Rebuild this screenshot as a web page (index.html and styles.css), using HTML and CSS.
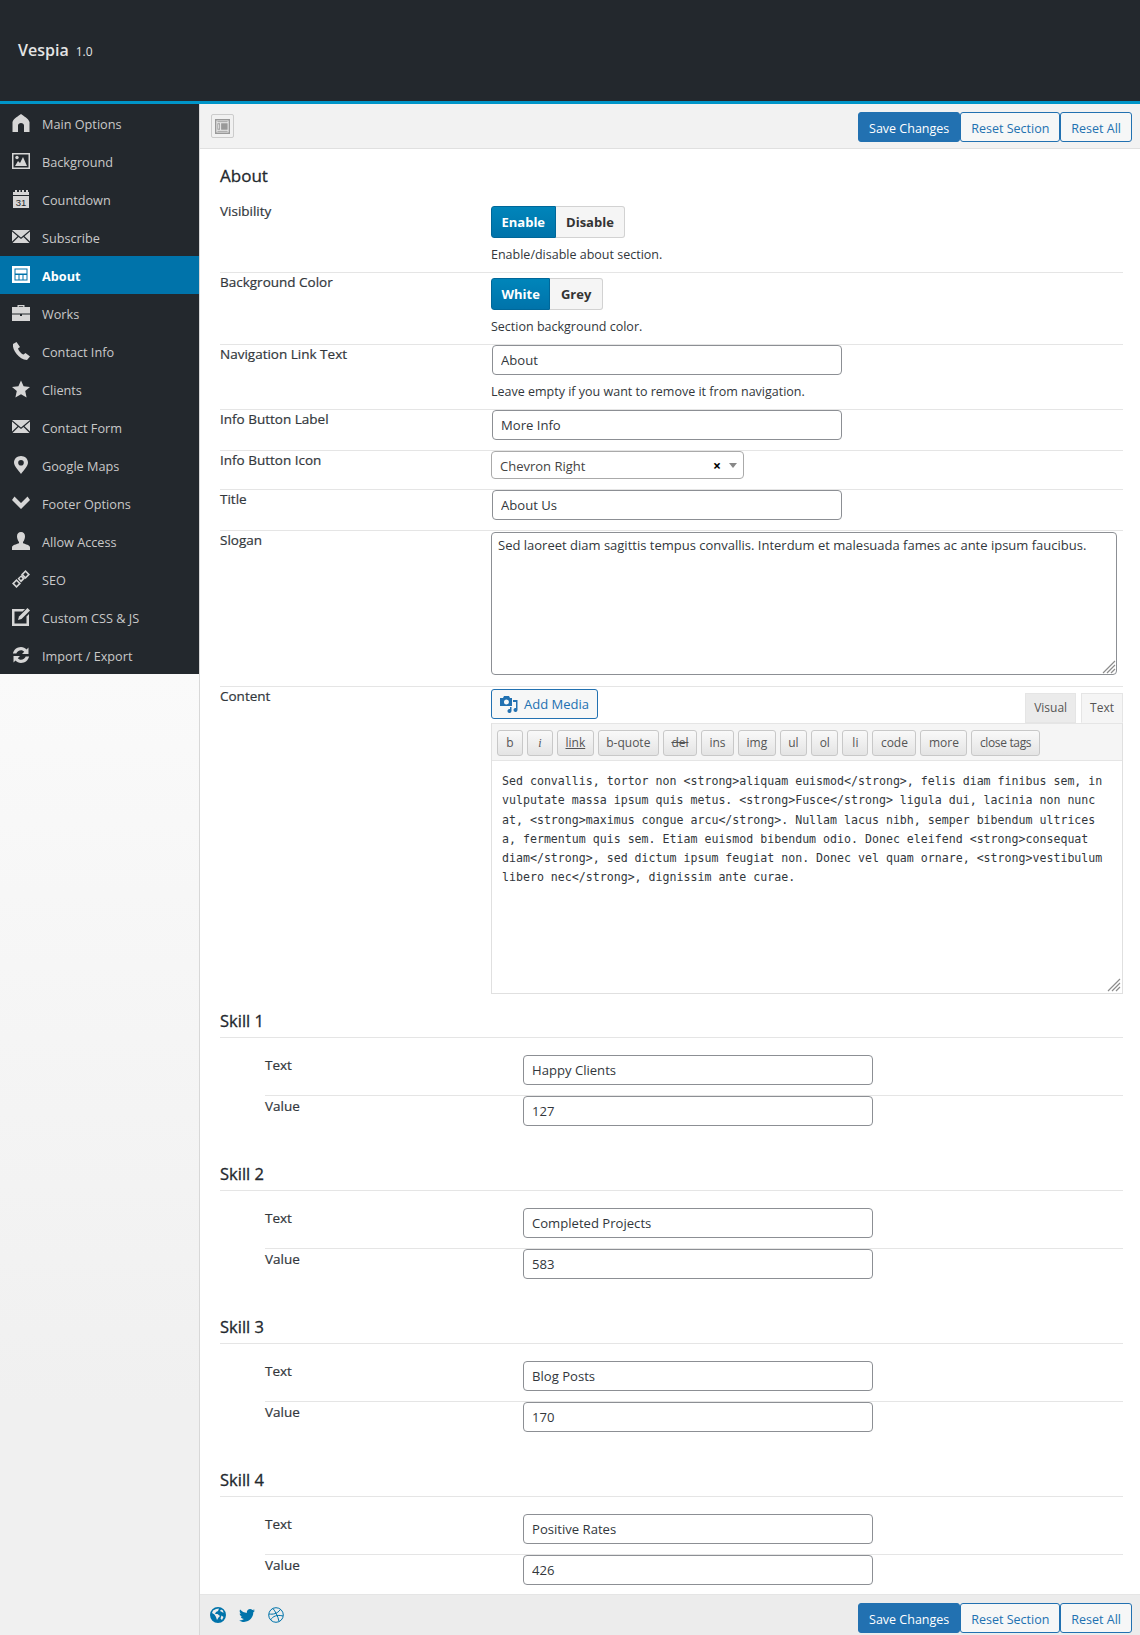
FILE: index.html
```html
<!DOCTYPE html>
<html lang="en">
<head>
<meta charset="utf-8">
<title>Vespia Options</title>
<link rel="stylesheet" href="styles.css">
</head>
<body>
<header class="topbar"><span class="brand">Vespia</span><span class="version">1.0</span></header>
<div class="layout">
  <nav class="sidebar">
    <ul class="menu">
      <li class="menu-item"><svg class="menu-icon" viewBox="0 0 18 18"><path d="M9 0C6.500 2.300 2 3.600.5 8v10H6v-6.500C6 10 7.400 9 9 9s3 1 3 2.500V18h5.500V8C16 3.600 11.500 2.300 9 0z"/></svg>Main Options</li>
      <li class="menu-item"><svg class="menu-icon" viewBox="0 0 18 18"><path fill-rule="evenodd" d="M0 1h18v16H0zM1.500 2.500v13h15v-13z"/><path d="M3 14l3-5 2 2 3-6 4 9z"/><circle cx="5" cy="5.500" r="1.700"/></svg>Background</li>
      <li class="menu-item"><svg class="menu-icon" viewBox="0 0 18 18"><path d="M1 2h2V0h2v2h2V0h1.500v2H10V0h2v2h2V0h2v2h1v3H1z"/><path d="M1 6h16v12H1z"/><text class="cal-num" x="9" y="16" text-anchor="middle">31</text></svg>Countdown</li>
      <li class="menu-item"><svg class="menu-icon" viewBox="0 0 18 18"><path d="M0 2h18L9 9.500zM0 3.500l5.500 4.700L0 13.500zM18 3.500l-5.500 4.700 5.500 5.300zM6.500 9L9 11l2.500-2 6 6H.5z"/></svg>Subscribe</li>
      <li class="menu-item is-active"><svg class="menu-icon" viewBox="0 0 18 18"><path fill-rule="evenodd" d="M0 0h18v17H0zM2.500 2.500v12h13v-12z"/><path d="M3.500 3.500h11v4h-11zM3.500 9h3v4.500h-3zM7.500 9h3v4.500h-3zM11.500 9h3v4.500h-3z"/></svg>About</li>
      <li class="menu-item"><svg class="menu-icon" viewBox="0 0 18 18"><path fill-rule="evenodd" d="M5.500 3V1h7v2H18v6.500H0V3zM6.800 2.200V3h4.400v-.8z"/><path d="M0 10.500h8V12h2v-1.500h8V17H0z"/></svg>Works</li>
      <li class="menu-item"><svg class="menu-icon" viewBox="0 0 18 18"><path d="M4.500 0L1 2C0 8 7 17.500 15 18l3-3.500-4.500-3.500-2 1.500C9.500 12 6.500 8.500 6 6.500L8 5z"/></svg>Contact Info</li>
      <li class="menu-item"><svg class="menu-icon" viewBox="0 0 18 18"><path d="M9 .5l2.600 5.800 6.400.6-4.800 4.200 1.400 6.400L9 14.200l-5.600 3.300 1.400-6.400L0 6.900l6.400-.6z"/></svg>Clients</li>
      <li class="menu-item"><svg class="menu-icon" viewBox="0 0 18 18"><path d="M0 2h18L9 9.500zM0 3.500l5.500 4.700L0 13.500zM18 3.500l-5.500 4.700 5.500 5.300zM6.500 9L9 11l2.500-2 6 6H.5z"/></svg>Contact Form</li>
      <li class="menu-item"><svg class="menu-icon" viewBox="0 0 18 18"><path fill-rule="evenodd" d="M9 0c3.800 0 7 2.800 7 6.600C16 10.500 11 15 9 18 7 15 2 10.500 2 6.600 2 2.800 5.200 0 9 0zm0 4a2.800 2.800 0 100 5.600A2.800 2.800 0 009 4z"/></svg>Google Maps</li>
      <li class="menu-item"><svg class="menu-icon" viewBox="0 0 18 18"><path d="M2.500 2.500L9 9l6.500-6.500L18 6l-9 9-9-9z"/></svg>Footer Options</li>
      <li class="menu-item"><svg class="menu-icon" viewBox="0 0 18 18"><path d="M9 0c2.500 0 4 1.800 4 4.300 0 2.400-1 4.700-2 5.600v1.400c2.500 1 7 1.800 7 4.200V18H0v-2.500c0-2.400 4.500-3.200 7-4.200V9.900c-1-.9-2-3.200-2-5.600C5 1.800 6.500 0 9 0z"/></svg>Allow Access</li>
      <li class="menu-item"><svg class="menu-icon" viewBox="0 0 18 18"><path fill-rule="evenodd" d="M0 13.500L4.500 9 9 13.500 4.500 18zM2.300 13.500L4.500 15.700 6.700 13.500 4.500 11.300z"/><path fill-rule="evenodd" d="M9 4.500L13.500 0 18 4.500 13.500 9zM11.300 4.500L13.500 6.700 15.700 4.500 13.500 2.300z"/><path fill-rule="evenodd" d="M5.500 8.500L9.500 5l3.500 3.500-4 4zM7.500 8.500L9 10l1.500-1.500L9 7z"/></svg>SEO</li>
      <li class="menu-item"><svg class="menu-icon" viewBox="0 0 18 18"><path d="M0 1h13l-2.500 2.500h-8v12h12v-7L17 6v12H0z"/><path d="M15.500 0L18 2.500 9.500 11 6 12l1-3.500z"/></svg>Custom CSS &amp; JS</li>
      <li class="menu-item"><svg class="menu-icon" viewBox="0 0 18 18"><path d="M9 1c2.200 0 4.200 1 5.500 2.500L16.500 1.500V8H10l2.200-2.200C11.500 5 10.300 4.300 9 4.300 6.900 4.300 5 5.600 4.300 7.500H.9C1.700 3.800 5 1 9 1zM1.500 10H8l-2.200 2.200c.7.800 1.900 1.500 3.200 1.500 2.100 0 4-1.300 4.700-3.200h3.400C16.300 14.200 13 17 9 17c-2.200 0-4.200-1-5.500-2.500l-2 2z"/></svg>Import / Export</li>
    </ul>
  </nav>
  <main class="main">
    <div class="actionbar">
      <span class="expand"><svg class="expand-icon" viewBox="0 0 16 16"><path fill-rule="evenodd" d="M0 0h16v16H0zM1.500 1.500v13h13v-13z"/><path d="M2.500 2.500h11v1h-11zM2.500 12.500h11v1h-11z"/><path fill-rule="evenodd" d="M2.500 4.500h3v7h-3zM3.500 5.500v5h1v-5z"/><path d="M6.500 4.500h7v7h-7z"/></svg></span>
      <div class="actions"><a class="btn btn-primary">Save Changes</a><a class="btn">Reset Section</a><a class="btn">Reset All</a></div>
    </div>
    <div class="content">
      <h2 class="section-title">About</h2>
      <div class="row row-tall row-first">
        <div class="label">Visibility</div>
        <div class="field"><div class="toggle"><span class="toggle-on">Enable</span><span class="toggle-off">Disable</span></div><p class="desc">Enable/disable about section.</p></div>
      </div>
      <div class="row row-tall">
        <div class="label">Background Color</div>
        <div class="field"><div class="toggle"><span class="toggle-on">White</span><span class="toggle-off">Grey</span></div><p class="desc">Section background color.</p></div>
      </div>
      <div class="row">
        <div class="label">Navigation Link Text</div>
        <div class="field"><input class="input" type="text" value="About"><p class="desc">Leave empty if you want to remove it from navigation.</p></div>
      </div>
      <div class="row row-pad">
        <div class="label">Info Button Label</div>
        <div class="field"><input class="input" type="text" value="More Info"></div>
      </div>
      <div class="row row-pad">
        <div class="label">Info Button Icon</div>
        <div class="field"><div class="select"><span class="select-value">Chevron Right</span><span class="select-clear">×</span><span class="select-arrow"></span></div></div>
      </div>
      <div class="row row-pad">
        <div class="label">Title</div>
        <div class="field"><input class="input" type="text" value="About Us"></div>
      </div>
      <div class="row row-slogan">
        <div class="label">Slogan</div>
        <div class="field"><div class="slogan-wrap"><textarea class="slogan" rows="5">Sed laoreet diam sagittis tempus convallis. Interdum et malesuada fames ac ante ipsum faucibus.</textarea><svg class="grip" viewBox="0 0 16 16"><path d="M15 3L3 15M15 7l-8 8M15 11l-4 4"/></svg></div></div>
      </div>
      <div class="row row-editor">
        <div class="label">Content</div>
        <div class="field">
          <div class="editor-head">
            <a class="media-btn"><svg class="media-icon" viewBox="0 0 18 18"><path fill-rule="evenodd" d="M0 3h3l1-2h5l1 2h2v8H0zM6.500 4.500a2.500 2.500 0 100 5 2.500 2.500 0 000-5z"/><path d="M13 5h4.500v10a2 2 0 11-1.500-2V7h-3z"/><path d="M11.500 12v4a2 2 0 11-1.500-2v-2z"/></svg>Add Media</a>
            <div class="tabs"><span class="tab">Visual</span><span class="tab tab-active">Text</span></div>
          </div>
          <div class="editor">
            <div class="quicktags"><span class="qt qt-b">b</span><span class="qt qt-i">i</span><span class="qt qt-link">link</span><span class="qt">b-quote</span><span class="qt qt-del">del</span><span class="qt">ins</span><span class="qt">img</span><span class="qt">ul</span><span class="qt">ol</span><span class="qt qt-li">li</span><span class="qt">code</span><span class="qt">more</span><span class="qt qt-close">close tags</span></div>
            <div class="code-wrap"><textarea class="code">Sed convallis, tortor non &lt;strong&gt;aliquam euismod&lt;/strong&gt;, felis diam finibus sem, in vulputate massa ipsum quis metus. &lt;strong&gt;Fusce&lt;/strong&gt; ligula dui, lacinia non nunc at, &lt;strong&gt;maximus congue arcu&lt;/strong&gt;. Nullam lacus nibh, semper bibendum ultrices a, fermentum quis sem. Etiam euismod bibendum odio. Donec eleifend &lt;strong&gt;consequat diam&lt;/strong&gt;, sed dictum ipsum feugiat non. Donec vel quam ornare, &lt;strong&gt;vestibulum libero nec&lt;/strong&gt;, dignissim ante curae.</textarea><svg class="grip" viewBox="0 0 16 16"><path d="M15 3L3 15M15 7l-8 8M15 11l-4 4"/></svg></div>
          </div>
        </div>
      </div>
      <section class="skill">
        <h3 class="skill-title">Skill 1</h3>
        <div class="subrow"><div class="sublabel">Text</div><input class="input" type="text" value="Happy Clients"></div>
        <div class="subrow"><div class="sublabel">Value</div><input class="input" type="text" value="127"></div>
      </section>
      <section class="skill">
        <h3 class="skill-title">Skill 2</h3>
        <div class="subrow"><div class="sublabel">Text</div><input class="input" type="text" value="Completed Projects"></div>
        <div class="subrow"><div class="sublabel">Value</div><input class="input" type="text" value="583"></div>
      </section>
      <section class="skill">
        <h3 class="skill-title">Skill 3</h3>
        <div class="subrow"><div class="sublabel">Text</div><input class="input" type="text" value="Blog Posts"></div>
        <div class="subrow"><div class="sublabel">Value</div><input class="input" type="text" value="170"></div>
      </section>
      <section class="skill">
        <h3 class="skill-title">Skill 4</h3>
        <div class="subrow"><div class="sublabel">Text</div><input class="input" type="text" value="Positive Rates"></div>
        <div class="subrow"><div class="sublabel">Value</div><input class="input" type="text" value="426"></div>
      </section>
    </div>
    <div class="footerbar">
      <div class="social">
        <svg class="social-icon" viewBox="0 0 16 16"><path fill-rule="evenodd" d="M8 0a8 8 0 110 16A8 8 0 018 0zM3 3.500L2 6l2.500 1.500L6 10l1 3 1.500-2.500L10 9 7.500 7 5 7l1-2 2-1 1-2.500L6 2zM11 2.500L10 4l2 1 1.500 1-.5-2.500zM11.500 8.500l-1 3L12 13l1.500-3z"/></svg>
        <svg class="social-icon" viewBox="0 0 16 16"><path d="M16 3.500c-.6.3-1.200.4-1.900.5.7-.4 1.200-1 1.400-1.800-.6.4-1.300.6-2.100.8C12.800 2.400 12 2 11.100 2 9.300 2 7.800 3.500 7.800 5.300c0 .3 0 .5.1.7C5.200 5.900 2.800 4.600 1.100 2.600c-.3.500-.4 1-.4 1.600 0 1.100.6 2.100 1.500 2.700-.5 0-1-.2-1.500-.4 0 1.600 1.100 2.900 2.600 3.200-.3.100-.6.100-.9.100-.2 0-.4 0-.6-.1.4 1.300 1.600 2.200 3.100 2.300-1.100.9-2.500 1.400-4.100 1.400H0c1.500.9 3.200 1.500 5 1.500 6 0 9.300-5 9.300-9.300v-.4c.7-.5 1.200-1.100 1.700-1.700z"/></svg>
        <svg class="social-icon social-line" viewBox="0 0 16 16"><circle cx="8" cy="8" r="7.300"/><path d="M5 1.500c2 2.500 5 7.500 6 13M1 7c4 .5 8 0 11.500-4.500M2.500 13C5 9 9 7.500 15 9"/></svg>
      </div>
      <div class="actions"><a class="btn btn-primary">Save Changes</a><a class="btn">Reset Section</a><a class="btn">Reset All</a></div>
    </div>
  </main>
</div>
</body>
</html>
```

FILE: styles.css
```css
* { box-sizing: border-box; }
html, body { margin: 0; padding: 0; }
body {
  font-family: "Open Sans", "Noto Sans", sans-serif;
  font-size: 13px;
  color: #32373c;
  background: #f1f1f1;
  width: 1140px;
  height: 1635px;
  overflow: hidden;
}
.topbar {
  height: 104px;
  background: #23282d;
  border-bottom: 3px solid #0095c8;
  padding: 40px 0 0 18px;
  color: #e4e4e4;
  display: flex;
  align-items: baseline;
}
.brand { font-size: 16px; font-weight: 600; line-height: 20px; }
.version { font-size: 12px; margin-left: 7px; }
.layout { display: grid; grid-template-columns: 200px 940px; height: 1531px; }
.sidebar {
  border-right: 1px solid #d8d8d8;
  background: linear-gradient(#fafafa 570px, #f0f0f0 1300px);
}
.menu { list-style: none; margin: 0; padding: 0; background: #23282d; }
.menu-item {
  height: 38px;
  display: flex;
  align-items: center;
  padding: 2px 0 0 12px;
  color: #c9c9c9;
  font-size: 12.700px;
  gap: 12px;
}
.menu-item.is-active { background: #0073aa; color: #fff; font-weight: 700; }
.menu-icon { width: 18px; height: 18px; fill: #d6d6d6; flex: none; margin-top: -2px; }
.is-active .menu-icon { fill: #fff; }
.cal-num { font-size: 9.500px; fill: #23282d; font-family: "Liberation Sans", sans-serif; }
.main { background: #fff; display: flex; flex-direction: column; height: 1531px; overflow: hidden; }
.actionbar {
  height: 45px;
  flex: none;
  background: #f2f2f2;
  border-bottom: 1px solid #e0e0e0;
  display: flex;
  justify-content: space-between;
  padding: 8px 8px 0 11px;
}
.expand {
  width: 23px;
  height: 24px;
  margin-top: 2px;
  background: #f1f1f1;
  border: 1px solid #ccc;
  border-radius: 2px;
  display: flex;
  align-items: center;
  justify-content: center;
}
.expand-icon { width: 15px; height: 15px; fill: #999; }
.actions { display: flex; }
.btn {
  height: 30px;
  line-height: 28px;
  padding: 2px 10px 0;
  border: 1px solid #2271b1;
  border-radius: 3px;
  background: #f6f7f7;
  color: #2271b1;
  font-size: 12.500px;
}
.btn-primary { background: #2271b1; color: #fff; }
.content { flex: 1; padding: 0 17px 0 20px; overflow: hidden; }
.section-title {
  margin: 0;
  height: 52px;
  padding-top: 15px;
  font-size: 17px;
  line-height: 24px;
  font-weight: 400;
  -webkit-text-stroke: .3px #23282d;
  color: #23282d;
}
.row { display: flex; border-bottom: 1px solid #e5e5e5; padding-bottom: 7px; }
.row-tall .field { padding-top: 5px; }
.row-pad { padding-bottom: 10px; }
.row-slogan { padding-bottom: 11px; }
.row-editor { border-bottom: 0; padding-bottom: 0; }
.label {
  width: 271px;
  flex: none;
  margin-top: -1px;
  line-height: 20px;
  font-size: 13.500px;
  -webkit-text-stroke: .2px #32373c;
  color: #32373c;
}
.row-first .label { margin-top: 0; }
.field { flex: 1; min-width: 0; }
.toggle { display: inline-flex; height: 32px; vertical-align: top; font-weight: 700; font-size: 13px; }
.toggle-on {
  background: linear-gradient(#0085ba, #0073aa);
  border: 1px solid #006799;
  border-radius: 3px 0 0 3px;
  color: #fff;
  padding: 0 9.500px;
  line-height: 30px;
}
.toggle-off {
  background: #f5f5f5;
  border: 1px solid #d2d2d2;
  border-left: 0;
  border-radius: 0 3px 3px 0;
  color: #333;
  padding: 0 10.500px 0 10.500px;
  line-height: 30px;
}
.desc { margin: 7px 0 0; line-height: 20px; font-size: 12.500px; color: #32373c; }
.input {
  display: block;
  width: 350px;
  height: 30px;
  margin-left: 1px;
  padding: 0 8px;
  border: 1px solid #8c8f94;
  border-radius: 4px;
  background: #fff;
  font: 13.100px "Open Sans", sans-serif;
  color: #32373c;
}
.select {
  width: 253px;
  height: 28px;
  border: 1px solid #aaa;
  border-radius: 4px;
  display: flex;
  align-items: center;
  padding: 1px 0 0 8px;
  color: #444;
  position: relative;
}
.select-value { flex: 1; }
.select-clear { color: #000; font-weight: 700; font-size: 14px; margin-right: 8px; }
.select-arrow {
  width: 0;
  height: 0;
  border-style: solid;
  border-width: 5px 4px 0;
  border-color: #888 transparent transparent;
  margin-right: 6px;
}
.slogan-wrap { position: relative; width: 626px; height: 143px; margin-top: 1px; }
.slogan {
  display: block;
  width: 100%;
  height: 100%;
  resize: none;
  border: 1px solid #8c8f94;
  border-radius: 4px;
  padding: 2px 6px;
  font: 13px/20px "Open Sans", sans-serif;
  color: #32373c;
}
.grip { position: absolute; right: 1px; bottom: 1px; width: 16px; height: 16px; stroke: #8c8c8c; stroke-width: 1.200; fill: none; }
.editor-head { display: flex; justify-content: space-between; align-items: flex-start; height: 36px; padding-top: 2px; }
.media-btn {
  display: flex;
  align-items: center;
  gap: 6px;
  width: 107px;
  height: 30px;
  padding-left: 8px;
  border: 1px solid #2271b1;
  border-radius: 3px;
  background: #f6f7f7;
  color: #2271b1;
}
.media-icon { width: 18px; height: 18px; fill: #2271b1; }
.tabs { display: flex; gap: 5px; padding-top: 4px; }
.tab {
  height: 30px;
  line-height: 28px;
  padding: 0 8px;
  border: 1px solid #e5e5e5;
  background: #ebebeb;
  color: #555;
  font-size: 12px;
}
.tab-active { background: #f5f5f5; border-bottom-color: #f5f5f5; }
.editor { border: 1px solid #e0e0e0; border-top-color: #e5e5e5; }
.quicktags {
  height: 37px;
  background: #f5f5f5;
  border-bottom: 1px solid #e5e5e5;
  display: flex;
  gap: 4px;
  padding: 6px 0 0 5px;
}
.qt {
  height: 26px;
  line-height: 24px;
  padding: 0 7.500px;
  border: 1px solid #c8c8c8;
  border-radius: 3px;
  background: linear-gradient(#f9f9f9, #e4e4e4);
  color: #555;
  font-size: 12px;
  text-align: center;
}
.qt-b { min-width: 26px; }
.qt-i { font-style: italic; font-family: "Liberation Serif", serif; min-width: 26px; }
.qt-li { min-width: 26px; }
.qt-link { text-decoration: underline; }
.qt-del { text-decoration: line-through; }
.qt-close { letter-spacing: -.35px; }
.code-wrap { position: relative; height: 232px; background: #fff; }
.code {
  display: block;
  width: 100%;
  height: 100%;
  border: 0;
  resize: none;
  outline: 0;
  padding: 11px 10px 0;
  overflow: hidden;
  font: 11.600px/19.300px "DejaVu Sans Mono", monospace;
  color: #32373c;
}
.skill { padding-bottom: 21px; }
.skill:last-child { padding-bottom: 9px; }
.skill-title {
  margin: 0 0 17px;
  height: 44px;
  padding-top: 15px;
  line-height: 24px;
  border-bottom: 1px solid #e5e5e5;
  font-size: 16.500px;
  font-weight: 400;
  -webkit-text-stroke: .3px #23282d;
  color: #23282d;
}
.subrow { display: flex; margin-left: 45px; border-bottom: 1px solid #e5e5e5; padding-bottom: 10px; }
.subrow:last-child { border-bottom: 0; padding-bottom: 0; }
.sublabel { width: 258px; flex: none; line-height: 20px; font-size: 13.500px; -webkit-text-stroke: .2px #32373c; color: #32373c; }
.subrow .input { margin-left: 0; }
.footerbar {
  height: 41px;
  flex: none;
  background: #ececec;
  border-top: 1px solid #e5e5e5;
  display: flex;
  justify-content: space-between;
  padding: 8px 8px 0 10px;
}
.social { display: flex; gap: 13px; padding-top: 4px; }
.social-icon { width: 16px; height: 16px; fill: #0073aa; }
.social-line { fill: none; stroke: #0073aa; stroke-width: 1; }
```
